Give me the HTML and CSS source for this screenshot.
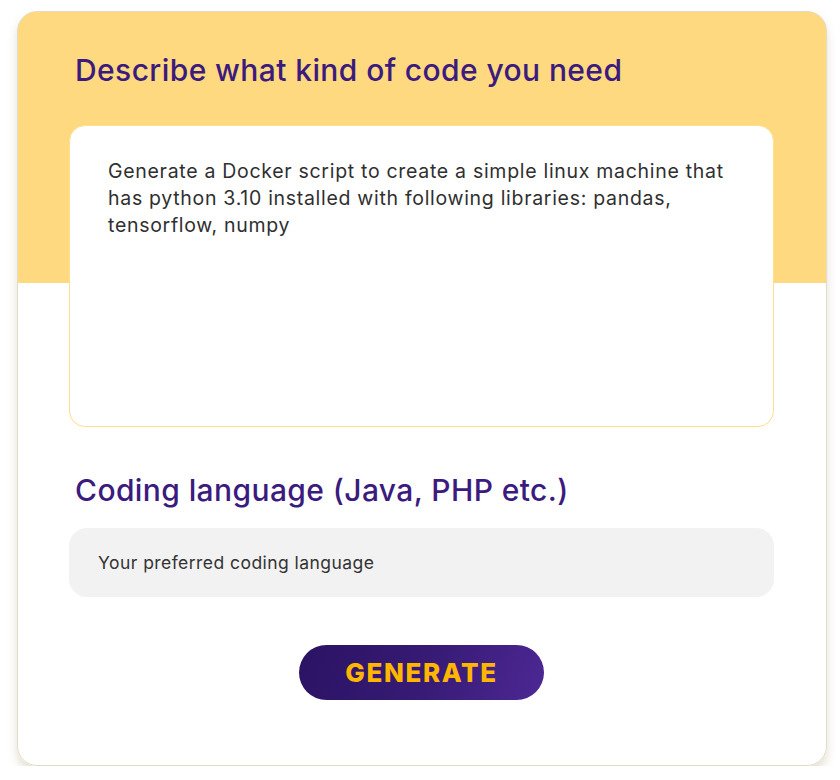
FILE: index.html
```html
<!DOCTYPE html>
<html>
<head>
<meta charset="utf-8">
<link rel="stylesheet" href="styles.css">
</head>
<body>
<div class="card">
  <h2 class="title">Describe what kind of code you need</h2>
  <div class="prompt">Generate a Docker script to create a simple linux machine that has python 3.10 installed with following libraries: pandas, tensorflow, numpy</div>
  <h2 class="title second">Coding language (Java, PHP etc.)</h2>
  <div class="field">Your preferred coding language</div>
  <div class="actions"><button class="btn">GENERATE</button></div>
</div>
</body>
</html>
```
FILE: styles.css
```css
html, body { margin: 0; padding: 0; background: #fff; }
body { font-family: Inter, "Open Sans", sans-serif; }
.card {
  box-sizing: border-box;
  margin: 11px 0 0 17px;
  width: 810px;
  height: 755px;
  border: 1px solid #e2dcc6;
  border-radius: 20px;
  background: linear-gradient(to bottom, #ffd97f 0, #ffd97f 271px, #fff 271px);
  box-shadow: 0 6px 10px rgba(150, 130, 80, 0.25);
  padding: 40px 52px 0 51px;
}
.title {
  margin: 0 0 0 6px;
  font-size: 30px;
  line-height: 36px;
  font-weight: 500;
  color: #3b1b7d;
  letter-spacing: 0.4px;
}
.prompt {
  box-sizing: border-box;
  margin-top: 37px;
  height: 302px;
  background: #fff;
  border: 1px solid #ffdf8a;
  border-radius: 16px;
  padding: 32px 36px 32px 38px;
  font-size: 19.5px;
  letter-spacing: 0.7px;
  line-height: 27px;
  color: #2f2f2f;
}
.second { margin-top: 45px; }
.field {
  margin-top: 20px;
  height: 69px;
  box-sizing: border-box;
  background: #f2f2f2;
  border-radius: 18px;
  padding: 0 29px;
  display: flex;
  align-items: center;
  font-size: 17.5px;
  letter-spacing: 0.45px;
  color: #333;
}
.actions { display: flex; justify-content: center; margin-top: 48px; }
.btn {
  width: 245px;
  height: 55px;
  border: none;
  border-radius: 28px;
  background: linear-gradient(110deg, #2b1363 0%, #361a74 50%, #4d2894 100%);
  color: #ffb600;
  font-family: Inter, sans-serif;
  font-weight: 800;
  font-size: 26px;
  letter-spacing: 1.6px;
  padding: 0;
}
```
